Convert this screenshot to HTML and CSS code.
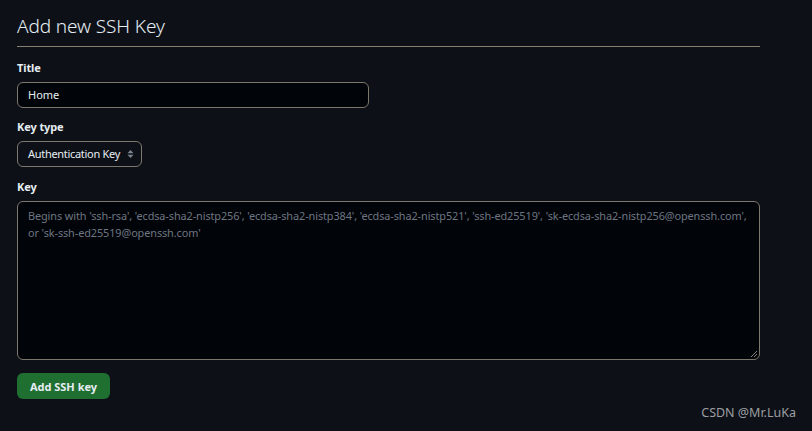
FILE: index.html
```html
<!DOCTYPE html>
<html>
<head>
<meta charset="utf-8">
<link rel="stylesheet" href="styles.css">
</head>
<body>
<main class="page">
  <h1 class="heading">Add new SSH Key</h1>
  <form class="form">
    <div class="field">
      <label class="label">Title</label>
      <div class="input">Home</div>
    </div>
    <div class="field">
      <label class="label">Key type</label>
      <div class="select">
        <span>Authentication Key</span>
        <svg class="arrows" width="7" height="10" viewBox="0 0 7 10"><path d="M3.5 1 L6.5 4.3 H0.5 Z" fill="#7d8590"/><path d="M3.5 9 L6.5 5.7 H0.5 Z" fill="#7d8590"/></svg>
      </div>
    </div>
    <div class="field field-key">
      <label class="label">Key</label>
      <div class="textarea">
        <p class="placeholder">Begins with 'ssh-rsa', 'ecdsa-sha2-nistp256', 'ecdsa-sha2-nistp384', 'ecdsa-sha2-nistp521', 'ssh-ed25519', 'sk-ecdsa-sha2-nistp256@openssh.com', or 'sk-ssh-ed25519@openssh.com'</p>
        <svg class="grip" width="9" height="9" viewBox="0 0 9 9"><path d="M8 2 L2 8 M8 5 L5 8" stroke="#8b8378" stroke-width="1"/></svg>
      </div>
    </div>
    <button type="button" class="btn">Add SSH key</button>
  </form>
  <div class="watermark">CSDN @Mr.LuKa</div>
</main>
</body>
</html>
```

FILE: styles.css
```css
html, body {
  margin: 0;
  padding: 0;
  background: #0d1117;
}
body {
  font-family: "Noto Sans", sans-serif;
  color: #e6edf3;
  width: 812px;
  height: 431px;
  overflow: hidden;
}
.page {
  padding: 10px 52px 0 17px;
  position: relative;
  height: 421px;
}
.heading {
  margin: 0;
  font-size: 19px;
  font-weight: 300;
  line-height: 33px;
  padding-bottom: 3px;
  border-bottom: 1px solid #8a8072;
  letter-spacing: -0.1px;
}
.form {
  display: flex;
  flex-direction: column;
  padding-top: 13px;
}
.field {
  display: flex;
  flex-direction: column;
  align-items: flex-start;
  margin-bottom: 11px;
}
.field-key {
  margin-top: 1px;
}
.label {
  font-size: 11px;
  font-weight: 700;
  line-height: 16px;
  margin-bottom: 6px;
  letter-spacing: -0.1px;
}
.input {
  box-sizing: border-box;
  width: 352px;
  height: 26px;
  border: 1px solid #7e776c;
  border-radius: 6px;
  background: #010409;
  font-size: 11px;
  line-height: 24px;
  padding: 0 10px;
}
.select {
  box-sizing: border-box;
  width: 125px;
  height: 26px;
  border: 1px solid #7e776c;
  border-radius: 6px;
  background: #0d1117;
  font-size: 11px;
  letter-spacing: -0.3px;
  line-height: 24px;
  padding: 0 7px 0 10px;
  display: flex;
  align-items: center;
  justify-content: space-between;
  white-space: nowrap;
}
.textarea {
  box-sizing: border-box;
  position: relative;
  width: 743px;
  height: 159px;
  border: 1px solid #7e776c;
  border-radius: 6px;
  background: #010409;
  padding: 5px 10px;
}
.placeholder {
  margin: 0;
  font-size: 10.9px;
  line-height: 17px;
  letter-spacing: -0.1px;
  color: #6e7681;
}
.grip {
  position: absolute;
  right: 1px;
  bottom: 1px;
}
.btn {
  align-self: flex-start;
  margin-top: 2px;
  width: 93px;
  height: 26px;
  border: none;
  border-radius: 6px;
  background: #1f6f30;
  color: #e6edf3;
  font-family: "Noto Sans", sans-serif;
  font-size: 11px;
  font-weight: 700;
  padding: 0;
}
.watermark {
  position: absolute;
  right: 16px;
  bottom: 10px;
  font-size: 12.5px;
  color: #9c9ea2;
}
```
